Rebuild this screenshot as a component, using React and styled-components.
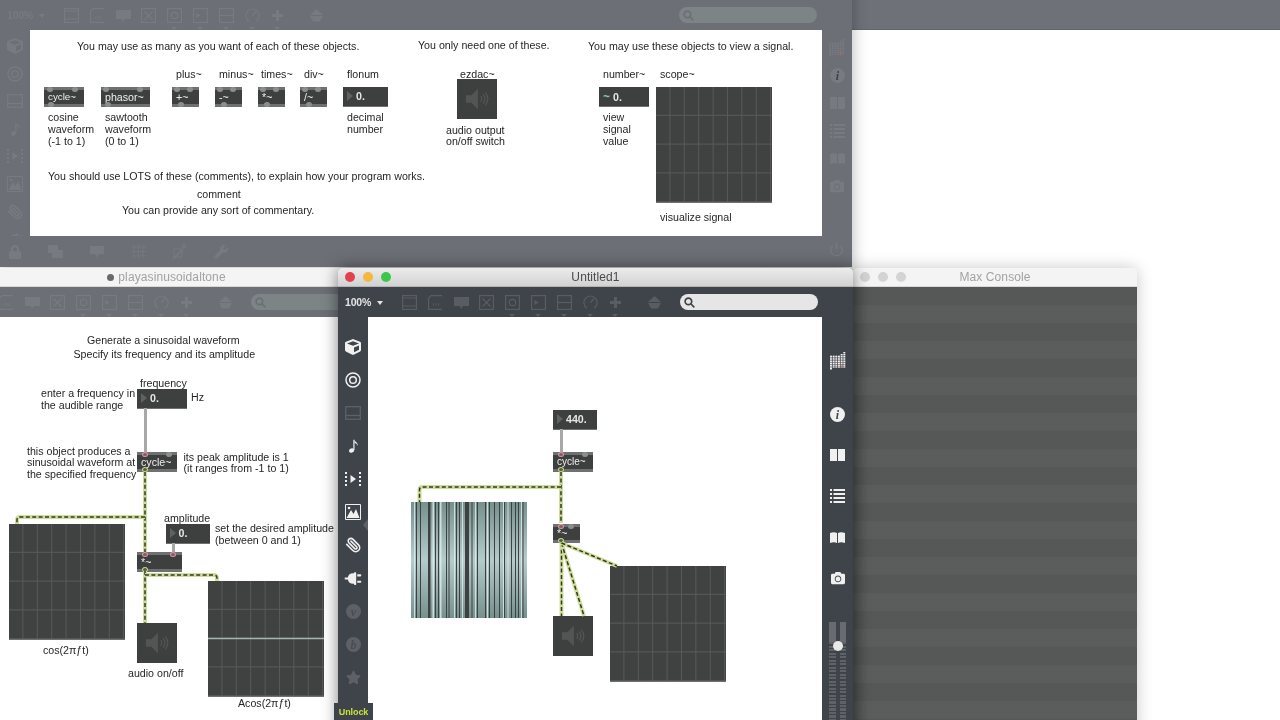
import styled, { createGlobalStyle } from "styled-components";
import { FaCube, FaStar, FaPlug, FaCamera, FaLock, FaWrench } from "react-icons/fa";
import { LuPaperclip, LuPower } from "react-icons/lu";

const GlobalStyle = createGlobalStyle`
  html, body {
    margin: 0;
    padding: 0;
    background: #fff;
    overflow: hidden;
  }
`;

const Desktop = styled.div`
  position: relative;
  width: 1280px;
  height: 720px;
  overflow: hidden;
  background: #fff;
  font-family: "Liberation Sans", Arial, sans-serif;
  filter: blur(0.35px);
`;

const TopStrip = styled.div`
  height: 30px;
  box-sizing: border-box;
  background: #6e7178;
  border-bottom: 1px solid #63666c;
`;

const Win = styled.div.attrs((p) => ({
  style: {
    left: p.$x,
    top: p.$y,
    width: p.$w,
    height: p.$h,
    zIndex: p.$z,
    boxShadow: p.$shadow ? `0 0 16px rgba(0, 0, 0, ${p.$shadow})` : "none",
  },
}))`
  position: absolute;
  display: flex;
  flex-direction: column;
  overflow: hidden;
  border-radius: 5px 5px 0 0;
`;

const ShadowBox = styled(Win)`
  overflow: visible;
`;

const TitleBar = styled.div`
  flex: 0 0 19px;
  display: flex;
  align-items: center;
  justify-content: center;
  position: relative;
  font-size: 12px;
  letter-spacing: 0.1px;
  color: ${(p) => (p.$active ? "#4a4a4a" : "#a2a2a2")};
  background: ${(p) =>
    p.$active ? "linear-gradient(#ececec, #d2d2d2)" : "#f4f4f4"};
  border-bottom: 1px solid ${(p) => (p.$active ? "#b5b5b5" : "#d8d8d8")};
  border-radius: 5px 5px 0 0;
  box-sizing: border-box;
`;

const Lights = styled.div`
  position: absolute;
  left: 7px;
  top: 4px;
  display: flex;
  gap: 8px;
`;

const Light = styled.span`
  width: 10px;
  height: 10px;
  border-radius: 50%;
  background: ${(p) => p.$color};
`;

const EditDot = styled.span`
  width: 7px;
  height: 7px;
  margin-right: 4px;
  border-radius: 50%;
  background: #6a6a6a;
`;

const Toolbar = styled.div`
  flex: 0 0 30px;
  display: flex;
  align-items: center;
  padding: 0 35px 0 7px;
  box-sizing: border-box;
  background: ${(p) => (p.$dim ? "#6c6f76" : "#3f434a")};
  color: ${(p) => (p.$dim ? "#777a81" : "#595d63")};
`;

const Zoom = styled.div`
  flex: 0 0 57px;
  font-size: 10.5px;
  font-weight: 700;
  letter-spacing: -0.2px;
  color: ${(p) => (p.$dim ? "#777a81" : "#e4e4e4")};
  &::after {
    content: "";
    display: inline-block;
    margin-left: 6px;
    vertical-align: 1px;
    border: 3px solid transparent;
    border-top: 4px solid currentColor;
    border-bottom: 0;
  }
`;

const ToolIcons = styled.div`
  display: flex;
  gap: 10.8px;
`;

const ToolIcon = styled.div`
  position: relative;
  width: 15px;
  height: 15px;
  &::after {
    content: ${(p) => (p.$menu ? '""' : "none")};
    position: absolute;
    left: 4px;
    top: 19px;
    border: 3px solid transparent;
    border-top: 3px solid currentColor;
    border-bottom: 0;
  }
`;

const Bucket = styled.div`
  margin-left: 24px;
  width: 15px;
  height: 15px;
`;

const Search = styled.div`
  margin-left: auto;
  width: 138px;
  height: 16px;
  border-radius: 8px;
  display: flex;
  align-items: center;
  padding-left: 4px;
  box-sizing: border-box;
  background: ${(p) => (p.$dim ? "#7d8486" : "#e6e6e6")};
  color: ${(p) => (p.$dim ? "#6c6f76" : "#3f434a")};
`;

const Body = styled.div`
  flex: 1;
  display: flex;
  min-height: 0;
`;

const Side = styled.div`
  flex: 0 0 ${(p) => p.$width}px;
  display: flex;
  flex-direction: column;
  align-items: center;
  overflow: hidden;
  position: relative;
  padding-top: ${(p) => p.$top}px;
  gap: ${(p) => p.$gap}px;
  box-sizing: border-box;
  background: ${(p) => (p.$dim ? "#6c6f76" : "#3f434a")};
  color: ${(p) => (p.$dim ? "#777a81" : "#f0f0f0")};
`;

const SideIcon = styled.div`
  flex: 0 0 auto;
  width: 16px;
  height: 16px;
  margin-bottom: ${(p) => p.$after || 0}px;
  display: flex;
  align-items: center;
  justify-content: center;
  color: ${(p) => (p.$faint ? (p.$dim ? "#777a81" : "#5d6167") : "inherit")};
`;

const Handle = styled.div`
  position: absolute;
  right: 0;
  top: 202px;
  border: 6px solid transparent;
  border-right: 5px solid #5d6167;
  border-left: 0;
`;

const Canvas = styled.div`
  position: relative;
  flex: 1;
  overflow: hidden;
  background: #fff;
`;

const BottomBar = styled.div`
  flex: 0 0 31px;
  display: flex;
  align-items: center;
  gap: 26px;
  padding: 0 8px;
  box-sizing: border-box;
  background: #6c6f76;
  color: #777a81;
`;

const Power = styled.div`
  margin-left: auto;
  margin-right: 0;
`;

const Comment = styled.div.attrs((p) => ({
  style: { left: p.$x, top: p.$y - 7 },
}))`
  position: absolute;
  font-size: 10.65px;
  line-height: 14px;
  color: #262626;
  white-space: nowrap;
`;

const Obj = styled.div.attrs((p) => ({
  style: { left: p.$x, top: p.$y, width: p.$w, height: p.$h, fontSize: p.$size },
}))`
  position: absolute;
  display: flex;
  align-items: center;
  padding-left: 4px;
  box-sizing: border-box;
  color: #ededed;
  background: #3d403f;
  border-top: 3px solid #6e7071;
  border-bottom: 3px solid #6e7071;
`;

const Port = styled.span.attrs((p) => ({
  style: { left: p.$x, top: p.$top ? -3 : undefined, bottom: p.$top ? undefined : -3 },
}))`
  position: absolute;
  width: 6px;
  height: 5px;
  border-radius: 50%;
  box-sizing: border-box;
  background: ${(p) => (p.$hot ? "#8a5a62" : p.$on ? "#55603c" : "#8c8e8e")};
  border: 1px solid ${(p) => (p.$hot ? "#d09aa6" : p.$on ? "#c6d68a" : "#8c8e8e")};
`;

const Num = styled.div.attrs((p) => ({
  style: { left: p.$x, top: p.$y, width: p.$w, height: p.$h },
}))`
  position: absolute;
  display: flex;
  align-items: center;
  gap: 3px;
  padding-left: 4px;
  box-sizing: border-box;
  font-size: 10.65px;
  font-weight: 700;
  color: #e6e6e6;
  background: #3d403f;
  border-bottom: 1px solid #6e7071;
`;

const Arrow = styled.span`
  border: 5px solid transparent;
  border-left: 6px solid #5f6262;
  border-right: 0;
`;

const Wave = styled.span`
  font-size: 12px;
  color: #7fc9b4;
`;

const Dac = styled.div.attrs((p) => ({
  style: { left: p.$x, top: p.$y },
}))`
  position: absolute;
  width: 40px;
  height: 40px;
  display: flex;
  align-items: center;
  justify-content: center;
  background: #3d403f;
  color: #525554;
`;

const Scope = styled.div.attrs((p) => ({
  style: { left: p.$x, top: p.$y },
}))`
  position: absolute;
  width: 116px;
  height: 116px;
  background-color: #3f4241;
  background-image:
    linear-gradient(to right, transparent 13.4px, #575a59 13.4px, #575a59 14.4px),
    linear-gradient(to bottom, transparent 27.8px, #585b5a 27.8px, #585b5a 28.8px);
  background-size: 14.4px 100%, 100% 28.8px;
  border-bottom: 1px solid #6e7071;
  box-sizing: border-box;
`;

const Cords = styled.svg`
  position: absolute;
  left: 0;
  top: 0;
  width: 100%;
  height: 100%;
  pointer-events: none;
`;

const Unlock = styled.div`
  position: absolute;
  left: 334px;
  top: 703px;
  width: 39px;
  height: 17px;
  z-index: 9;
  display: flex;
  align-items: center;
  justify-content: center;
  font-size: 9px;
  font-weight: 700;
  letter-spacing: -0.1px;
  color: #c6e23e;
  background: #3f434a;
`;

const Console = styled.div`
  flex: 1;
  position: relative;
  background:
    linear-gradient(to right, rgba(0, 0, 0, 0.12), transparent 16px),
    repeating-linear-gradient(#565757 0, #565757 18px, #5b5c5c 18px, #5b5c5c 36px);
`;

const Meter = styled.div`
  position: absolute;
  left: 7px;
  top: 305px;
  width: 17px;
  height: 100px;
  display: flex;
  justify-content: space-between;
`;

const MeterBar = styled.div`
  width: 6.5px;
  background: repeating-linear-gradient(#5f6368 0, #5f6368 2px, #3f434a 2px, #3f434a 3.5px);
  border-top: 20px solid #686c72;
`;

const Knob = styled.div`
  position: absolute;
  left: 3.5px;
  top: 19px;
  width: 10px;
  height: 10px;
  border-radius: 50%;
  background: #e8e8e8;
`;

const box15 = { width: 15, height: 15, viewBox: "0 0 15 15", fill: "none", stroke: "currentColor", strokeWidth: 1.2 };

const toolIcons = [
  <svg {...box15} key="a"><rect x=".6" y=".6" width="13.8" height="13.8" /><path d="M1 3h13M1 11h13" /></svg>,
  <svg {...box15} key="b"><path d="M14 .6H3L.6 3v11.4H14" /><path d="M6 8l-1 3M8.5 8l-1 3M11 8l-1 3" strokeWidth=".8" /></svg>,
  <svg {...box15} key="c"><path d="M0 2h15v9H9l-2 3-1-3H0z" fill="currentColor" stroke="none" /></svg>,
  <svg {...box15} key="d"><rect x=".6" y=".6" width="13.8" height="13.8" /><path d="M3.5 3.5l8 8M11.5 3.5l-8 8" /></svg>,
  <svg {...box15} key="e"><rect x=".6" y=".6" width="13.8" height="13.8" /><circle cx="7.5" cy="7.5" r="3.2" /></svg>,
  <svg {...box15} key="f"><rect x=".6" y=".6" width="13.8" height="13.8" /><path d="M3.5 5v5l4-2.5z" fill="currentColor" stroke="none" /></svg>,
  <svg {...box15} key="g"><rect x=".6" y=".6" width="13.8" height="13.8" /><path d="M.6 7.5h13.8" /></svg>,
  <svg {...box15} key="h"><path d="M4 13.2a6.600 6.600 0 1 1 7 0" /><path d="M7.500 7.500l3.500-4" /></svg>,
  <svg {...box15} key="i" strokeWidth="3"><path d="M7.5 2v11M2 7.5h11" /></svg>,
];

const bucket = (
  <svg width="15" height="15" viewBox="0 0 15 15" fill="currentColor">
    <path d="M7.5 1l6.5 6H1zM1 8h13l-3 5.500H4z" />
  </svg>
);

const lens = (
  <svg width="11" height="11" viewBox="0 0 11 11" fill="none" stroke="currentColor" strokeWidth="1.7">
    <circle cx="4.4" cy="4.4" r="3.3" />
    <path d="M7 7l3.300 3.300" />
  </svg>
);

const speaker = (
  <svg width="24" height="24" viewBox="0 0 26 26" fill="none" stroke="currentColor">
    <path d="M1 9h6l7-7v22l-7-7H1z" fill="currentColor" stroke="none" />
    <path d="M17 10c1.500 2 1.500 4 0 6M19.500 8c2.500 3 2.500 7 0 10M22 6c3.500 4.500 3.500 9.500 0 14" strokeWidth="1.400" />
  </svg>
);

const target = (
  <svg width="16" height="16" viewBox="0 0 16 16" fill="none" stroke="currentColor" strokeWidth="1.500">
    <circle cx="8" cy="8" r="7" />
    <circle cx="8" cy="8" r="3.300" />
  </svg>
);

const film = (
  <svg width="16" height="14" viewBox="0 0 16 14" fill="none" stroke="currentColor" strokeWidth="1.300">
    <rect x=".7" y=".7" width="14.600" height="12.600" />
    <path d="M1 9.500h14" />
  </svg>
);

const note = (
  <svg width="11" height="16" viewBox="0 0 14 18" fill="currentColor">
    <ellipse cx="4.500" cy="14.800" rx="3.300" ry="2.700" transform="rotate(-20 4.500 14.800)" />
    <path d="M6.800 1h1.500v13.500H6.800z" />
    <path d="M8.300 1c.4 3 4.700 3.500 4.200 8-.8-2.800-2.600-3.300-4.200-3.800z" />
  </svg>
);

const filmPlay = (
  <svg width="16" height="16" viewBox="0 0 16 16" fill="currentColor">
    <path d="M5.500 4v8L11 8z" />
    <path d="M0 1h2v2H0zM0 5h2v2H0zM0 9h2v2H0zM0 13h2v2H0zM14 1h2v2h-2zM14 5h2v2h-2zM14 9h2v2h-2zM14 13h2v2h-2z" />
  </svg>
);

const picture = (
  <svg width="16" height="16" viewBox="0 0 16 16">
    <path d="M.5.5h15v15H.5z" fill="none" stroke="currentColor" />
    <path d="M1.500 14L6 6l2.500 4L11 5l3.500 9z" fill="currentColor" />
    <circle cx="4" cy="4" r="1.300" fill="currentColor" />
  </svg>
);

const letter = (ch, shade = 0.7) => (
  <svg width="15" height="15" viewBox="0 0 15 15">
    <circle cx="7.500" cy="7.500" r="7.500" fill="currentColor" />
    <text x="7.500" y="11.500" textAnchor="middle" fontSize="12" fontStyle="italic" fontWeight="700" fontFamily="Liberation Serif" fill="#3f434a" opacity={shade}>{ch}</text>
  </svg>
);

const gridIcon = (
  <svg width="18" height="20" viewBox="0 0 18 20" fill="currentColor">
    {Array.from({ length: 42 }, (_, i) => (
      <rect key={i} x={(i % 6) * 3} y={4 + Math.floor(i / 6) * 2} width="2.200" height="1.500" />
    ))}
    <path d="M12 2h2.200v1.500H12zM15 0h2.200v1.500H15zM15 2h2.200v1.500H15z" />
    <path d="M0 18h2.200v1.500H0z" />
    <path d="M12 14h2.200v4H12z" fill="#c06a4a" opacity="0.6" />
  </svg>
);

const books = (
  <svg width="15" height="12" viewBox="0 0 15 12" fill="currentColor">
    <path d="M0 0h7v12H0zM8 0h7v12H8z" />
  </svg>
);

const listIcon = (
  <svg width="15" height="14" viewBox="0 0 15 14" fill="currentColor">
    <path d="M0 0h2v2H0zM0 4h2v2H0zM0 8h2v2H0zM0 12h2v2H0zM3.500 0H15v2H3.500zM3.500 4H15v2H3.500zM3.500 8H15v2H3.500zM3.500 12H15v2H3.500z" />
  </svg>
);

const openBook = (
  <svg width="15" height="11" viewBox="0 0 15 11" fill="currentColor">
    <path d="M0 1q4-1.500 7 0v10q-3-1.500-7 0zM8 1q3-1.500 7 0v10q-4-1.500-7 0z" />
  </svg>
);

const stack = (
  <svg width="15" height="13" viewBox="0 0 15 13" fill="currentColor"><path d="M0 0h10v8H0zM4 5h11v8H4z" /></svg>
);
const chat = (
  <svg width="16" height="14" viewBox="0 0 15 15" fill="currentColor"><path d="M0 1h15v9H9l-2 4-1-4H0z" /></svg>
);
const gridLines = (
  <svg width="15" height="15" viewBox="0 0 15 15" fill="none" stroke="currentColor"><path d="M3 0v15M12 0v15M0 3h15M0 12h15M7.500 0v15M0 7.500h15" strokeWidth=".8" /></svg>
);
const sparkle = (
  <svg width="16" height="16" viewBox="0 0 16 16" fill="none" stroke="currentColor" strokeWidth="1.500"><path d="M1 15L10 6M12 0v5M9.500 2.500h5" /><rect x="2" y="5" width="8" height="8" strokeWidth="1" /></svg>
);

// left bar of a patcher window, in order
const leftIcons = [
  { icon: <FaCube size={16} /> },
  { icon: target },
  { icon: film, faint: true },
  { icon: note },
  { icon: filmPlay },
  { icon: picture },
  { icon: <LuPaperclip size={18} strokeWidth={2.4} style={{ transform: "scaleX(-1)" }} /> },
  { icon: <FaPlug size={17} style={{ transform: "rotate(90deg)" }} /> },
  { icon: letter("v"), faint: true },
  { icon: letter("b"), faint: true },
  { icon: <FaStar size={15} />, faint: true },
];

const rightIcons = [
  { icon: gridIcon },
  { icon: letter("i", 1) },
  { icon: books },
  { icon: listIcon },
  { icon: openBook },
  { icon: <FaCamera size={14} /> },
];

function WindowTools({ dim, bare }) {
  return (
    <Toolbar $dim={dim}>
      <Zoom $dim={dim}>{bare ? "" : "100%"}</Zoom>
      <ToolIcons>
        {toolIcons.map((icon, i) => (
          <ToolIcon key={i} $menu={i > 3}>{icon}</ToolIcon>
        ))}
      </ToolIcons>
      <Bucket>{bucket}</Bucket>
      <Search $dim={dim}>{lens}</Search>
    </Toolbar>
  );
}

function LeftBar({ dim, top, gap, handle, count = 11 }) {
  return (
    <Side $width={30} $dim={dim} $top={top} $gap={gap}>
      {leftIcons.slice(0, count).map((item, i) => (
        <SideIcon key={i} $faint={item.faint} $dim={dim}>{item.icon}</SideIcon>
      ))}
      {handle && <Handle />}
    </Side>
  );
}

function RightBar({ dim, top, gap, width, first, meter }) {
  return (
    <Side $width={width} $dim={dim} $top={top} $gap={gap}>
      {rightIcons.map((item, i) => (
        <SideIcon key={i} $dim={dim} $after={i === 0 ? first : 0}>{item.icon}</SideIcon>
      ))}
      {meter && (
        <Meter>
          <MeterBar />
          <MeterBar />
          <Knob />
        </Meter>
      )}
    </Side>
  );
}

function Cord({ d, signal }) {
  if (!signal) {
    return <path d={d} fill="none" stroke="#a8a8a8" strokeWidth="3" />;
  }
  return (
    <>
      <path d={d} fill="none" stroke="#cfdf98" strokeWidth="4" strokeLinejoin="round" />
      <path d={d} fill="none" stroke="#33362a" strokeWidth="1.500" strokeDasharray="4 2.400" />
    </>
  );
}

function Tilde({ x, y, w, label, size = 10.65, ports = [] }) {
  return (
    <Obj $x={x} $y={y} $w={w} $h={19.5} $size={size}>
      {ports.map((p, i) => (
        <Port key={i} $x={p.x} $top={p.top} $hot={p.hot} $on={p.on} />
      ))}
      {label}
    </Obj>
  );
}

function Flonum({ x, y, w, value }) {
  return (
    <Num $x={x} $y={y} $w={w} $h={19.5}>
      <Arrow />
      {value}
    </Num>
  );
}

const cycleFree = [{ x: 3, top: true }, { x: 28, top: true }, { x: 4 }];
const phasorFree = [{ x: 2, top: true }, { x: 36, top: true }, { x: 4 }];
const smallFree = [{ x: 2, top: true }, { x: 15, top: true }, { x: 6 }];

// noisy scope trace of the running patch, offset and width in px
const darkBars = [
  [5, 1], [9, 1], [17, 2.500], [24, 1], [27, 1], [35, 1], [37.500, 1], [45, 1], [48, 1],
  [54, 4], [60.500, 1], [66, 1], [74, 1], [78, 1], [83, 1], [88, 1], [93, 1], [100, 1],
  [104, 1], [107, 1], [111.500, 1],
];
const paleBars = [[3, 1], [21.500, 1.500], [29, 1.500], [43, 1], [51, 1], [64, 1], [76, 1], [92, 1], [96.500, 1], [110, 1]];

function NoisyScope({ x, y }) {
  return (
    <Scope $x={x} $y={y}>
      <svg width="116" height="116" viewBox="0 0 116 116">
        <defs>
          <linearGradient id="trace" x1="0" y1="0" x2="0" y2="1">
            <stop offset="0" stopColor="#76908e" />
            <stop offset="0.5" stopColor="#b4cccb" />
            <stop offset="1" stopColor="#76908e" />
          </linearGradient>
        </defs>
        <rect width="116" height="116" fill="url(#trace)" />
        {darkBars.map(([bx, bw], i) => (
          <rect key={i} x={bx} width={bw} height="116" fill="#3e4140" />
        ))}
        {paleBars.map(([bx, bw], i) => (
          <rect key={i} x={bx} width={bw} height="116" fill="#dfeeee" opacity="0.8" />
        ))}
      </svg>
    </Scope>
  );
}

function TopPatch() {
  const o = { x: 30, y: 30 };
  const C = ({ x, y, children }) => <Comment $x={x - o.x} $y={y - o.y}>{children}</Comment>;
  return (
    <>
      <C x={77} y={46}>You may use as many as you want of each of these objects.</C>
      <C x={176} y={74}>plus~</C>
      <C x={219} y={74}>minus~</C>
      <C x={261} y={74}>times~</C>
      <C x={304} y={74}>div~</C>
      <C x={347} y={74}>flonum</C>
      <Tilde x={14} y={57} w={40} size={9.800} label="cycle~" ports={cycleFree} />
      <Tilde x={71} y={57} w={48.500} label="phasor~" ports={phasorFree} />
      <Tilde x={142} y={57} w={27} label="+~" ports={smallFree} />
      <Tilde x={185} y={57} w={27} label="-~" ports={smallFree} />
      <Tilde x={228} y={57} w={27} label="*~" ports={smallFree} />
      <Tilde x={270} y={57} w={27} label="/~" ports={smallFree} />
      <Flonum x={313} y={57} w={45} value="0." />
      <C x={48} y={117}>cosine</C>
      <C x={48} y={129}>waveform</C>
      <C x={48} y={141}>(-1 to 1)</C>
      <C x={105} y={117}>sawtooth</C>
      <C x={105} y={129}>waveform</C>
      <C x={105} y={141}>(0 to 1)</C>
      <C x={347} y={117}>decimal</C>
      <C x={347} y={129}>number</C>
      <C x={48} y={176}>You should use LOTS of these (comments), to explain how your program works.</C>
      <C x={197} y={194}>comment</C>
      <C x={122} y={210}>You can provide any sort of commentary.</C>
      <C x={418} y={45}>You only need one of these.</C>
      <C x={460} y={74}>ezdac~</C>
      <Dac $x={427} $y={49}>{speaker}</Dac>
      <C x={446} y={130}>audio output</C>
      <C x={446} y={141}>on/off switch</C>
      <C x={588} y={46}>You may use these objects to view a signal.</C>
      <C x={603} y={74}>number~</C>
      <C x={660} y={74}>scope~</C>
      <Num $x={569} $y={57} $w={50} $h={20}>
        <Wave>~</Wave>0.
      </Num>
      <C x={603} y={117}>view</C>
      <C x={603} y={129}>signal</C>
      <C x={603} y={141}>value</C>
      <Scope $x={626} $y={57} />
      <C x={660} y={217}>visualize signal</C>
    </>
  );
}

function LeftPatch() {
  const o = { x: -61, y: 317 };
  const C = ({ x, y, children }) => <Comment $x={x - o.x} $y={y - o.y}>{children}</Comment>;
  const X = (x) => x - o.x;
  const Y = (y) => y - o.y;
  return (
    <>
      <C x={87} y={340}>Generate a sinusoidal waveform</C>
      <C x={73.500} y={354}>Specify its frequency and its amplitude</C>
      <C x={140} y={383}>frequency</C>
      <C x={41} y={393}>enter a frequency in</C>
      <C x={41} y={404.500}>the audible range</C>
      <C x={191} y={397}>Hz</C>
      <C x={27} y={450.500}>this object produces a</C>
      <C x={27} y={462}>sinusoidal waveform at</C>
      <C x={27} y={474}>the specified frequency</C>
      <C x={183.500} y={457}>its peak amplitude is 1</C>
      <C x={183.500} y={468}>(it ranges from -1 to 1)</C>
      <C x={164} y={518}>amplitude</C>
      <C x={215} y={528}>set the desired amplitude</C>
      <C x={215} y={539.500}>(between 0 and 1)</C>
      <C x={43} y={649.500}>cos(2πƒt)</C>
      <C x={128} y={673}>audio on/off</C>
      <C x={238} y={703}>Acos(2πƒt)</C>
      <Flonum x={X(137)} y={Y(389)} w={50} value="0." />
      <Tilde x={X(137)} y={Y(452)} w={40} label="cycle~" ports={[{ x: 5, top: true, hot: true }, { x: 29, top: true }, { x: 5, on: true }]} />
      <Flonum x={X(165.500)} y={Y(524)} w={44.500} value="0." />
      <Tilde x={X(137)} y={Y(552)} w={45} label="*~" ports={[{ x: 5, top: true, hot: true }, { x: 33, top: true, hot: true }, { x: 5, on: true }]} />
      <Dac $x={X(137)} $y={Y(623)}>{speaker}</Dac>
      <Scope $x={X(9)} $y={Y(524)} />
      <Scope $x={X(208)} $y={Y(581)}>
        <svg width="116" height="115" viewBox="0 0 116 115"><path d="M0 57.500h116" stroke="#a4b5b0" strokeWidth="1.500" /></svg>
      </Scope>
      <Cords>
        <g transform={`translate(${-o.x} ${-o.y})`}>
          <Cord d="M145.500 408V452" />
          <Cord d="M173.500 543V552" />
          <Cord signal d="M145 472V552" />
          <Cord signal d="M145 517H20Q17 517 17 520V524" />
          <Cord signal d="M145 571V623" />
          <Cord signal d="M145 575H214Q217 575 217 578V581" />
        </g>
      </Cords>
    </>
  );
}

function ActivePatch() {
  const o = { x: 368, y: 317 };
  const X = (x) => x - o.x;
  const Y = (y) => y - o.y;
  return (
    <>
      <Flonum x={X(553)} y={Y(410)} w={44} value="440." />
      <Tilde x={X(553)} y={Y(452)} w={40} size={10} label="cycle~" ports={[{ x: 5, top: true, hot: true }, { x: 29, top: true }, { x: 5, on: true }]} />
      <Tilde x={X(553)} y={Y(523.500)} w={27} label="*~" ports={[{ x: 5, top: true, hot: true }, { x: 15, top: true }, { x: 5, on: true }]} />
      <Dac $x={X(553)} $y={Y(616)}>{speaker}</Dac>
      <NoisyScope x={X(411)} y={Y(502)} />
      <Scope $x={X(610)} $y={Y(566)} />
      <Cords>
        <g transform={`translate(${-o.x} ${-o.y})`}>
          <Cord d="M561.500 429V452" />
          <Cord signal d="M561 472V523" />
          <Cord signal d="M561 487H422Q419.500 487 419.500 490V502" />
          <Cord signal d="M561.500 543V616" />
          <Cord signal d="M561.500 543L584 616" />
          <Cord signal d="M561.500 543L617 566" />
        </g>
      </Cords>
    </>
  );
}

export default function App() {
  return (
    <Desktop>
      <GlobalStyle />
      <TopStrip />

      <ShadowBox $x={0} $y={-19} $w={852} $h={286} $z={1} $shadow={0.3}>
        <TitleBar />
        <WindowTools dim />
        <Body>
          <LeftBar dim top={8} gap={11.600} count={8} />
          <Canvas>
            <TopPatch />
          </Canvas>
          <RightBar dim top={10} gap={11.500} width={30} first={0} />
        </Body>
        <BottomBar>
          <FaLock size={14} />
          {stack}
          {chat}
          {gridLines}
          {sparkle}
          <FaWrench size={14} />
          <Power><LuPower size={15} /></Power>
        </BottomBar>
      </ShadowBox>

      <Win $x={-91} $y={268} $w={515} $h={472} $z={2}>
        <TitleBar>
          <EditDot />
          playasinusoidaltone
        </TitleBar>
        <WindowTools dim bare />
        <Body>
          <LeftBar dim top={8} gap={17} count={0} />
          <Canvas>
            <LeftPatch />
          </Canvas>
        </Body>
      </Win>

      <ShadowBox $x={853} $y={268} $w={284} $h={472} $z={3} $shadow={0.22}>
        <TitleBar>
          <Lights>
            <Light $color="#d4d4d4" />
            <Light $color="#d4d4d4" />
            <Light $color="#d4d4d4" />
          </Lights>
          Max Console
        </TitleBar>
        <Console />
      </ShadowBox>

      <ShadowBox $x={338} $y={268} $w={515} $h={472} $z={4} $shadow={0.5}>
        <TitleBar $active>
          <Lights>
            <Light $color="#e2424e" />
            <Light $color="#f5b73c" />
            <Light $color="#39c84a" />
          </Lights>
          Untitled1
        </TitleBar>
        <WindowTools />
        <Body>
          <LeftBar top={22} gap={17} handle />
          <Canvas>
            <ActivePatch />
          </Canvas>
          <RightBar top={36} gap={25} width={31} first={12} meter />
        </Body>
      </ShadowBox>

      <Unlock>Unlock</Unlock>
    </Desktop>
  );
}
